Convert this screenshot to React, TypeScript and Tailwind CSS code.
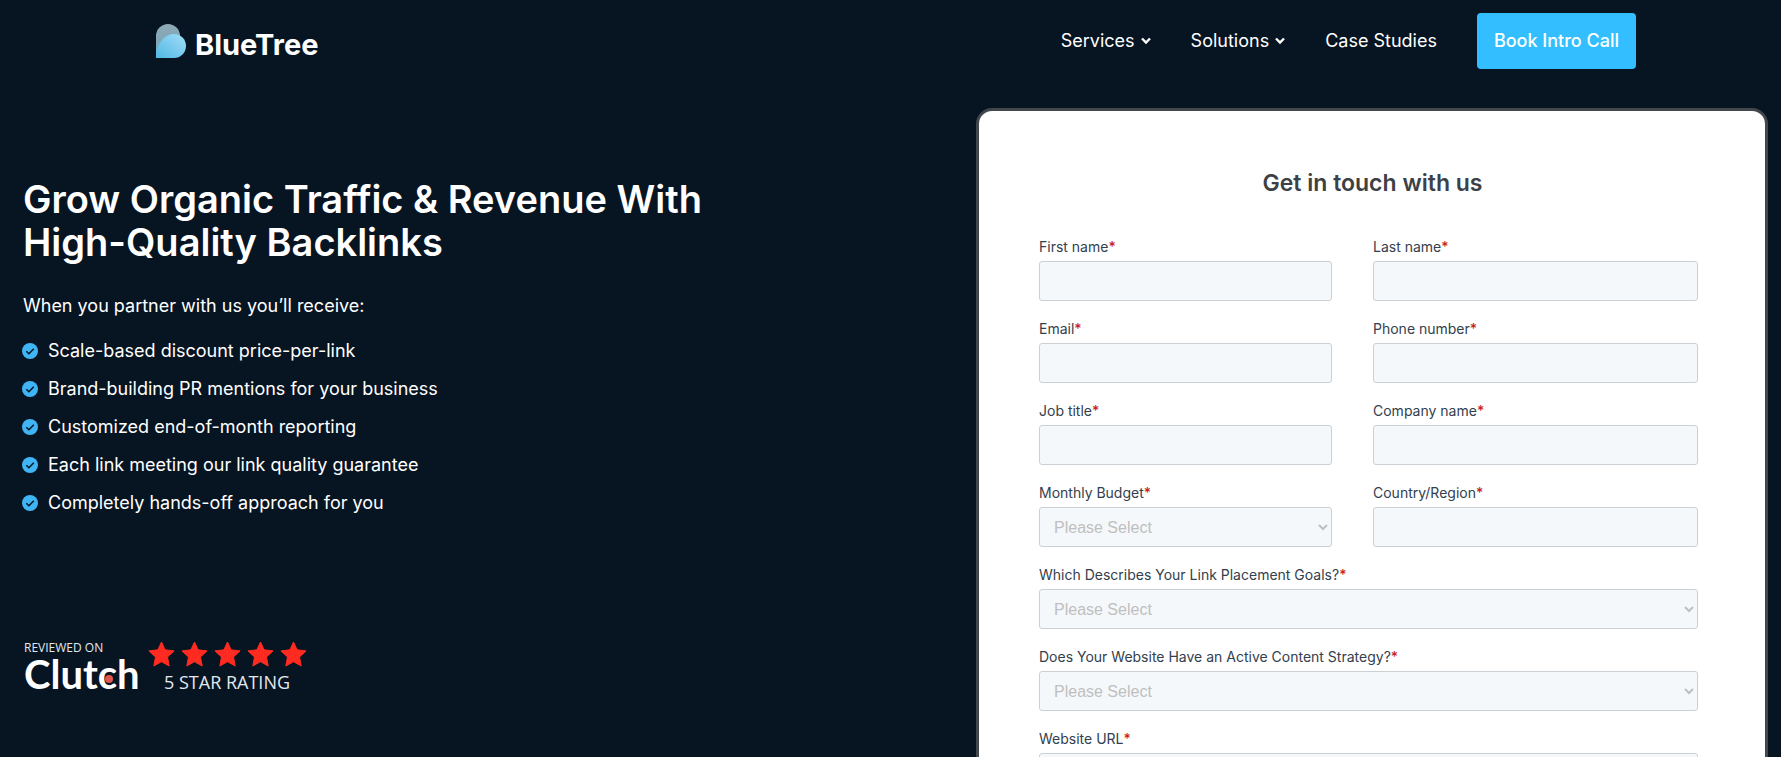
import { ReactNode } from 'react';

const benefits = [
  'Scale-based discount price-per-link',
  'Brand-building PR mentions for your business',
  'Customized end-of-month reporting',
  'Each link meeting our link quality guarantee',
  'Completely hands-off approach for you',
];

const fields = [
  { id: 'firstname', label: 'First name' },
  { id: 'lastname', label: 'Last name' },
  { id: 'email', label: 'Email' },
  { id: 'phone', label: 'Phone number' },
  { id: 'jobtitle', label: 'Job title' },
  { id: 'company', label: 'Company name' },
  { id: 'budget', label: 'Monthly Budget', select: true },
  { id: 'country', label: 'Country/Region' },
  { id: 'goals', label: 'Which Describes Your Link Placement Goals?', select: true, wide: true },
  { id: 'strategy', label: 'Does Your Website Have an Active Content Strategy?', select: true, wide: true },
  { id: 'website', label: 'Website URL', wide: true },
];

function Logo() {
  return (
    <a href="#" className="flex items-end gap-2">
      <svg width="31" height="34" viewBox="0 0 31 34" aria-hidden="true">
        <defs>
          <linearGradient id="leafBack" x1="0" y1="0" x2="0" y2="1">
            <stop offset="0" stopColor="#8fa9b5" />
            <stop offset="1" stopColor="#6fa5bb" />
          </linearGradient>
          <linearGradient id="leafFront" x1="1" y1="0" x2="0" y2="1">
            <stop offset="0" stopColor="#a4dcf8" />
            <stop offset="1" stopColor="#4fb9e4" />
          </linearGradient>
        </defs>
        <path d="M0 34V12a12 12 0 0 1 24 0v10L18 34z" fill="url(#leafBack)" />
        <path d="M0 34V27C3 18 9 10 18 10a12 12 0 0 1 0 24z" fill="url(#leafFront)" />
      </svg>
      <span className="text-[29px] leading-[26px] font-bold">BlueTree</span>
    </a>
  );
}

function NavMenu({ children }: { children: ReactNode }) {
  return (
    <button type="button" className="flex items-center gap-[6px]">
      {children}
      <svg width="10" height="8" viewBox="0 0 10 8" fill="none" stroke="currentColor" strokeWidth="2.4" aria-hidden="true">
        <path d="M1 1.500l4 4 4-4" />
      </svg>
    </button>
  );
}

function CheckBullet() {
  return (
    <svg width="16" height="16" viewBox="0 0 16 16" className="shrink-0" aria-hidden="true">
      <circle cx="8" cy="8" r="8" fill="#3fb5f6" />
      <path d="M4.300 8.200l2.600 2.500 4.900-5" fill="none" stroke="#071422" strokeWidth="1.500" />
    </svg>
  );
}

function Star() {
  return (
    <svg width="27" height="26" viewBox="0 0 27 26" aria-hidden="true">
      <path
        d="M13.500 1l3.600 7.800 9 1.100-6.600 6.100 1.700 9-7.700-4.300-7.700 4.300 1.700-9L.9 9.900l9-1.100z"
        fill="#ff2b20"
        stroke="#ff2b20"
        strokeWidth="1"
        strokeLinejoin="round"
      />
    </svg>
  );
}

function ClutchBadge() {
  return (
    <div className="flex gap-2">
      <div className="pl-[2px]">
        <p className="font-['Open_Sans'] text-[12px] leading-[14px] text-[#e3e9ef]">REVIEWED ON</p>
        <p className="mt-px font-['Lato'] text-[40px] leading-9 font-bold">
          Clut
          <span className="relative">
            c
            <span className="absolute top-[61%] left-[60%] size-2 -translate-x-1/2 -translate-y-1/2 rounded-full bg-[#e0574f]" />
          </span>
          h
        </p>
      </div>
      <div className="flex flex-col items-center gap-[3px]">
        <div className="flex gap-[6px]">
          {benefits.map((item) => (
            <Star key={item} />
          ))}
        </div>
        <p className="font-['Open_Sans'] text-[18px] leading-6 text-[#e3e9ef]">5 STAR RATING</p>
      </div>
    </div>
  );
}

export default function App() {
  return (
    <div className="h-screen overflow-hidden bg-[#071422] font-['Inter',sans-serif] text-white">
      <header className="flex items-center justify-between pt-[13px] pr-[145px] pl-[156px]">
        <Logo />
        <nav className="flex items-center gap-10 text-[18px] leading-6">
          <NavMenu>Services</NavMenu>
          <NavMenu>Solutions</NavMenu>
          <a href="#">Case Studies</a>
          <a href="#" className="rounded bg-[#33bfff] px-[17px] py-4 font-medium">
            Book Intro Call
          </a>
        </nav>
      </header>

      <main className="mt-[39px] grid grid-cols-[954fr_792fr] pr-[13px] pl-[22px]">
        <section className="pt-[70px]">
          <h1 className="pl-px text-[38px] leading-[43px] font-semibold">
            Grow Organic Traffic & Revenue With
            <br />
            High-Quality Backlinks
          </h1>
          <p className="mt-7 pl-px text-[18px] leading-[27px]">When you partner with us you’ll receive:</p>
          <ul className="mt-[18px] text-[18px] leading-[27px]">
            {benefits.map((item) => (
              <li key={item} className="mb-[11px] flex items-center gap-[10px]">
                <CheckBullet />
                {item}
              </li>
            ))}
          </ul>
          <div className="mt-[125px]">
            <ClutchBadge />
          </div>
        </section>

        <section className="rounded-[16px] border-[3px] border-[#43484d] bg-white pt-[56px] pr-[67px] pb-14 pl-[60px]">
          <h2 className="pl-2 text-center text-[23px] leading-8 font-semibold text-[#3d4145]">Get in touch with us</h2>
          <form className="mt-[38px] grid grid-cols-[293fr_325fr] gap-x-[41px] gap-y-[18px]">
            {fields.map((field) => (
              <div key={field.id} className={field.wide ? 'col-span-2' : ''}>
                <label htmlFor={field.id} className="mb-1 block text-[14px] leading-5 text-[#33404d]">
                  {field.label}
                  <span className="font-medium text-[#c81e1e]">*</span>
                </label>
                {field.select ? (
                  <select
                    id={field.id}
                    className="h-10 w-full rounded-[3px] border border-[#cbd0d4] bg-[#f5f8fa] px-[10px] font-['Liberation_Sans'] text-[16px] text-[#bfbfbf]"
                  >
                    <option>Please Select</option>
                  </select>
                ) : (
                  <input
                    id={field.id}
                    type="text"
                    className="h-10 w-full rounded-[3px] border border-[#cbd0d4] bg-[#f5f8fa] px-[10px] text-[16px] text-[#33475b]"
                  />
                )}
              </div>
            ))}
          </form>
        </section>
      </main>
    </div>
  );
}
